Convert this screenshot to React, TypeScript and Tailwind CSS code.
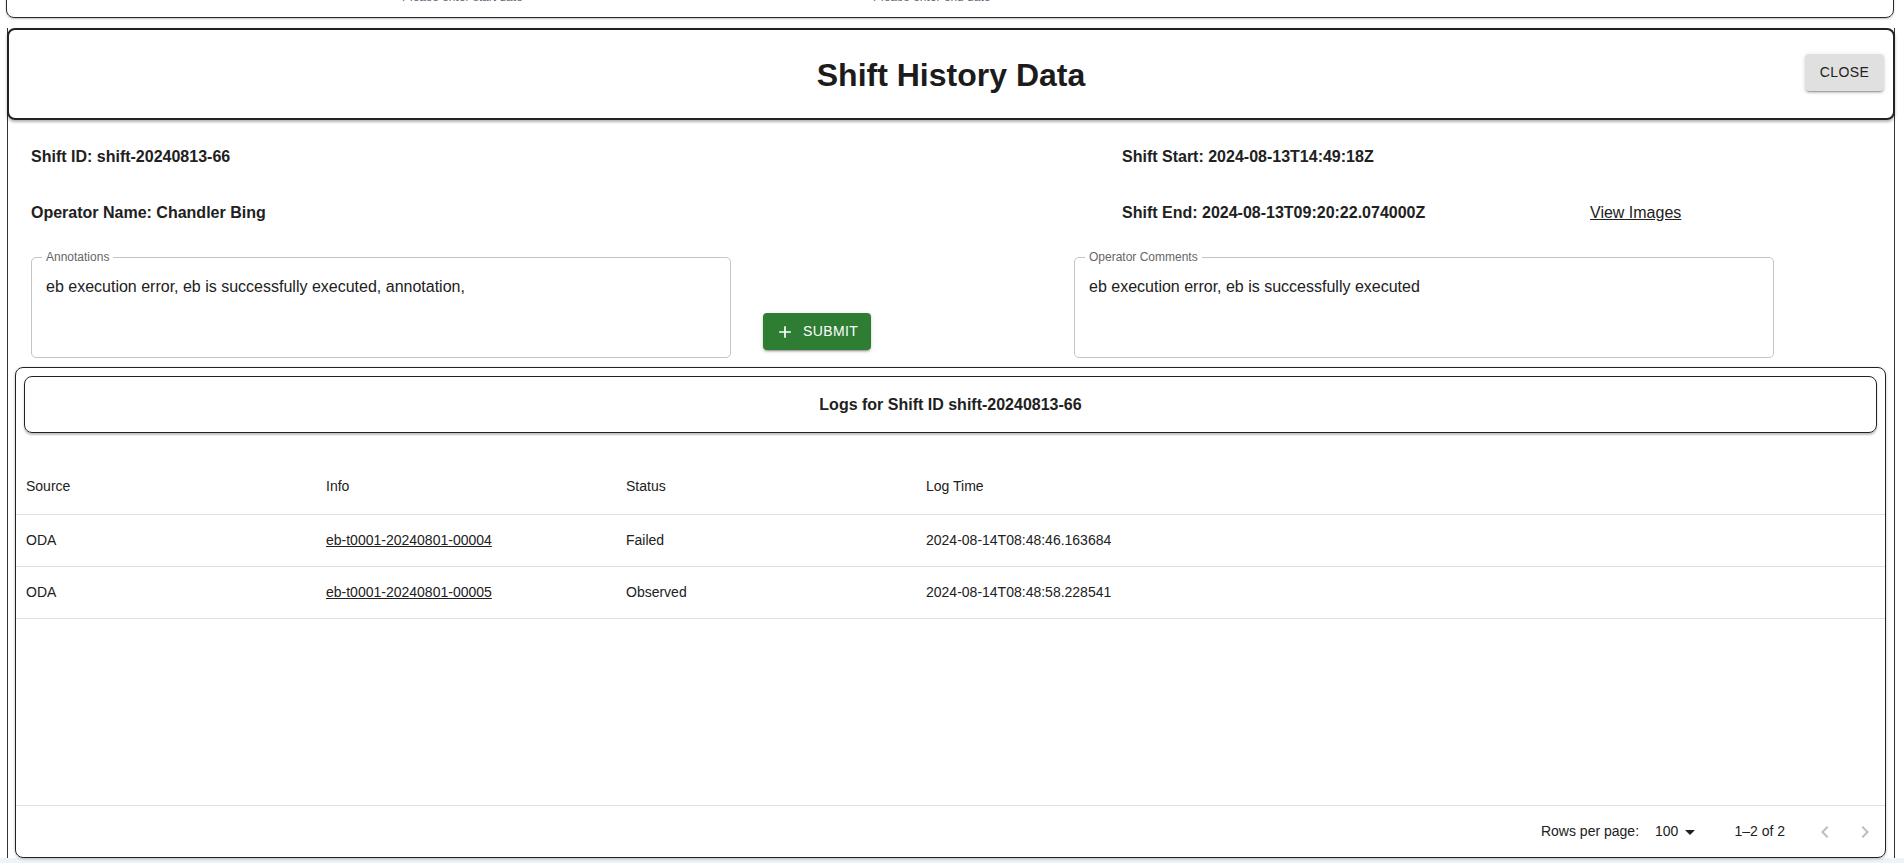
import React from "react";

const font = { fontFamily: '"Liberation Sans", Arial, Helvetica, sans-serif' };

function AddIcon() {
  return (
    <svg viewBox="0 0 24 24" className="w-[20px] h-[20px]" fill="currentColor">
      <path d="M19 13h-6v6h-2v-6H5v-2h6V5h2v6h6z" />
    </svg>
  );
}

function TextArea({ label, value }: { label: string; value: string }) {
  return (
    <div className="relative w-[700px] h-[101px] rounded-[5px] border border-[#c4c4c4] px-[14px] pt-[17px]">
      <span className="absolute -top-[9px] left-[10px] px-[4px] bg-white text-[12px] leading-[16px] text-[#666666]">
        {label}
      </span>
      <div className="text-[16px] leading-[23px] text-[#212121]">{value}</div>
    </div>
  );
}

const rows = [
  { source: "ODA", info: "eb-t0001-20240801-00004", status: "Failed", time: "2024-08-14T08:48:46.163684" },
  { source: "ODA", info: "eb-t0001-20240801-00005", status: "Observed", time: "2024-08-14T08:48:58.228541" },
];

export default function App() {
  return (
    <div style={font} className="w-[1904px] h-[863px] overflow-hidden bg-[#eef3f9] text-[#212121]">
      <div className="h-[858px] bg-white flex flex-col">
        {/* top card, mostly scrolled out of view */}
        <div className="ml-[6px] mr-[10px] -mt-[40px] h-[58px] shrink-0 flex items-end pb-[10px] border border-[#2a2a2a] rounded-[8px] shadow-[0_1px_2px_rgba(0,0,0,0.25)]">
          <span className="ml-[395px] w-[471px] text-[12px] leading-[20px] text-[#5f6b7a]">Please enter start date</span>
          <span className="text-[12px] leading-[20px] text-[#5f6b7a]">Please enter end date</span>
        </div>

        {/* dialog */}
        <div className="ml-[7px] mr-[9px] mt-[10px] flex-1 flex flex-col border-x border-[#333333] min-h-0">
          <div className="-mx-px h-[92px] shrink-0 grid grid-cols-[1fr_auto_1fr] items-center border-2 border-[#222222] rounded-[8px] shadow-[0_2px_3px_rgba(0,0,0,0.3)]">
            <div />
            <h1 className="text-[32px] font-bold leading-[37px] text-[#1c1c1c] pt-[2px]">Shift History Data</h1>
            <div className="flex justify-end pr-[9px]">
              <button className="w-[79px] h-[37px] rounded-[4px] bg-[#e0e0e0] text-[14px] font-medium tracking-[0.4px] text-[#212121] shadow-[0_3px_1px_-2px_rgba(0,0,0,0.2),0_2px_2px_0_rgba(0,0,0,0.14),0_1px_5px_0_rgba(0,0,0,0.12)] -mt-[3px]">
                CLOSE
              </button>
            </div>
          </div>

          <div className="pl-[23px] shrink-0">
            <div className="mt-[25px] flex text-[16px] leading-[24px] font-bold">
              <div className="w-[1091px]">Shift ID: shift-20240813-66</div>
              <div>Shift Start: 2024-08-13T14:49:18Z</div>
            </div>
            <div className="mt-[32px] flex text-[16px] leading-[24px]">
              <div className="w-[1091px] font-bold">Operator Name: Chandler Bing</div>
              <div className="w-[468px] font-bold">Shift End: 2024-08-13T09:20:22.074000Z</div>
              <a className="underline text-[#212121]">View Images</a>
            </div>
            <div className="mt-[32px] flex items-end">
              <TextArea label="Annotations" value="eb execution error, eb is successfully executed, annotation," />
              <button className="ml-[32px] mb-[8px] h-[37px] w-[108px] flex items-center pl-[12px] rounded-[4px] bg-[#2e7d32] text-white text-[14px] font-medium tracking-[0.4px] shadow-[0_3px_1px_-2px_rgba(0,0,0,0.2),0_2px_2px_0_rgba(0,0,0,0.14),0_1px_5px_0_rgba(0,0,0,0.12)]">
                <AddIcon />
                <span className="ml-[8px]">SUBMIT</span>
              </button>
              <div className="ml-[203px]">
                <TextArea label="Operator Comments" value="eb execution error, eb is successfully executed" />
              </div>
            </div>
          </div>

          {/* logs card */}
          <div className="ml-[7px] mr-[8px] mt-[9px] flex-1 min-h-0 flex flex-col border border-[#222222] rounded-[8px] shadow-[0_1px_3px_rgba(0,0,0,0.25)]">
            <div className="mx-[8px] mt-[8px] h-[57px] shrink-0 flex items-center justify-center border-[1.5px] border-[#222222] rounded-[8px] shadow-[0_2px_2px_rgba(0,0,0,0.25)]">
              <span className="text-[16px] font-bold">Logs for Shift ID shift-20240813-66</span>
            </div>

            <div className="mt-[26px] flex-1 flex flex-col min-h-0 text-[14px]">
              <div className="h-[56px] shrink-0 grid grid-cols-[300px_300px_300px_1fr] items-center border-b border-[#e0e0e0]">
                <div className="px-[10px]">Source</div>
                <div className="px-[10px]">Info</div>
                <div className="px-[10px]">Status</div>
                <div className="px-[10px]">Log Time</div>
              </div>
              {rows.map((r) => (
                <div key={r.info} className="h-[52px] shrink-0 grid grid-cols-[300px_300px_300px_1fr] items-center border-b border-[#e0e0e0]">
                  <div className="px-[10px]">{r.source}</div>
                  <div className="px-[10px]">
                    <a className="underline">{r.info}</a>
                  </div>
                  <div className="px-[10px]">{r.status}</div>
                  <div className="px-[10px]">{r.time}</div>
                </div>
              ))}
              <div className="flex-1" />
              <div className="h-[52px] shrink-0 border-t border-[#e0e0e0] flex items-center justify-end">
                <span>Rows per page:</span>
                <div className="ml-[16px] flex items-center">
                  <span>100</span>
                  <svg viewBox="0 0 24 24" className="w-[24px] h-[24px]" fill="#212121">
                    <path d="M7 10l5 5 5-5z" />
                  </svg>
                </div>
                <span className="ml-[32px]">1–2 of 2</span>
                <div className="ml-[20px] flex">
                  <div className="w-[40px] h-[40px] flex items-center justify-center">
                    <svg viewBox="0 0 24 24" className="w-[24px] h-[24px]" fill="#bdbdbd">
                      <path d="M15.41 16.59 10.83 12l4.58-4.59L14 6l-6 6 6 6z" />
                    </svg>
                  </div>
                  <div className="w-[40px] h-[40px] flex items-center justify-center">
                    <svg viewBox="0 0 24 24" className="w-[24px] h-[24px]" fill="#bdbdbd">
                      <path d="M8.59 16.59 13.17 12 8.59 7.41 10 6l6 6-6 6z" />
                    </svg>
                  </div>
                </div>
              </div>
            </div>
          </div>
        </div>
      </div>
    </div>
  );
}
